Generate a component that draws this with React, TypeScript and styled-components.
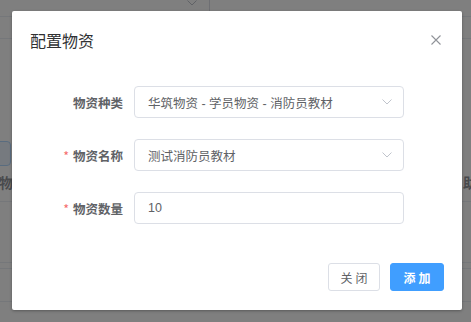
import styled, { createGlobalStyle } from 'styled-components'

const GlobalStyle = createGlobalStyle`
    html, body {
        margin: 0;
        padding: 0;
        background: #fff;
    }
    body {
        font-family: "Liberation Sans", "Noto Sans CJK SC", sans-serif;
    }
`;

const Page = styled.div`
    position: relative;
    width: 471px;
    height: 322px;
    overflow: hidden;
    background: #fff;
`;

const TopBar = styled.div`
    height: 16px;
    border-bottom: 1px solid #ebeef5;
    display: flex;
`;

const TopSelect = styled.div`
    width: 210px;
    height: 11px;
    border-right: 1px solid #dcdfe6;
    display: flex;
    justify-content: flex-end;
    align-items: flex-start;
    padding-right: 12px;
    box-sizing: border-box;
    color: #c0c4cc;
`;

const PageRow = styled.div<{ $h: number }>`
    height: ${p => p.$h}px;
    border-bottom: 1px solid #ebeef5;
    box-sizing: border-box;
`;

const ToolRow = styled.div`
    height: 163px;
    box-sizing: border-box;
    padding-top: 102px;
    display: flex;
    flex-direction: column;
    justify-content: space-between;
    border-bottom: 1px solid #ebeef5;
`;

const GhostButton = styled.div`
    width: 40px;
    height: 23px;
    margin-left: -31px;
    border: 1px solid #b3d8ff;
    border-radius: 4px;
    background: #ecf5ff;
`;

const HeadRow = styled.div`
    display: flex;
    justify-content: space-between;
    align-items: center;
    height: 22px;
    margin-bottom: 8px;
    font-size: 14px;
    font-weight: bold;
    color: #909399;
`;

const HeadCellLeft = styled.span`
    margin-left: -1px;
`;

const HeadCellRight = styled.span`
    margin-right: -6px;
`;

const Overlay = styled.div`
    position: absolute;
    inset: 0;
    background: rgba(0, 0, 0, 0.5);
    padding: 11px 0 0 12px;
    box-sizing: border-box;
`;

const Dialog = styled.div`
    width: 450px;
    height: 299px;
    background: #fff;
    border-radius: 2px;
    box-shadow: 0 1px 3px rgba(0, 0, 0, 0.3);
    display: flex;
    flex-direction: column;
    box-sizing: border-box;
`;

const Header = styled.div`
    display: flex;
    justify-content: space-between;
    align-items: center;
    padding: 18px 21px 0 18px;
    height: 22px;
`;

const Title = styled.span`
    font-size: 16px;
    line-height: 22px;
    color: #303133;
    font-family: "Noto Sans CJK SC", sans-serif;
`;

const CloseIcon = styled.span`
    display: flex;
    color: #909399;
    margin-top: -1px;
`;

const Form = styled.div`
    display: flex;
    flex-direction: column;
    gap: 21px;
    padding-top: 35px;
`;

const Field = styled.div`
    display: flex;
    align-items: center;
    height: 32px;
`;

const Label = styled.label`
    width: 111px;
    padding-right: 11px;
    text-align: right;
    font-size: 12.5px;
    font-weight: bold;
    color: #606266;
    font-family: "Noto Sans CJK SC", sans-serif;
    box-sizing: content-box;
    flex-shrink: 0;
`;

const Star = styled.span`
    color: #f56c6c;
    margin-right: 4px;
    font-weight: normal;
`;

const InputBox = styled.div`
    width: 270px;
    height: 32px;
    border: 1px solid #dcdfe6;
    border-radius: 4px;
    box-sizing: border-box;
    display: flex;
    align-items: center;
    justify-content: space-between;
    padding: 0 11px 0 13px;
    font-size: 12.5px;
    color: #606266;
`;

const Chevron = styled.span`
    display: flex;
    color: #c0c4cc;
`;

const Footer = styled.div`
    margin-top: auto;
    display: flex;
    justify-content: flex-end;
    gap: 10px;
    padding: 0 18px 19px 0;
`;

const Button = styled.button<{ $primary?: boolean }>`
    height: 28px;
    width: ${p => (p.$primary ? 54 : 52)}px;
    border-radius: 3px;
    border: 1px solid ${p => (p.$primary ? '#409eff' : '#dcdfe6')};
    background: ${p => (p.$primary ? '#409eff' : '#fff')};
    color: ${p => (p.$primary ? '#fff' : '#606266')};
    font-size: 12px;
    font-weight: ${p => (p.$primary ? 'bold' : 'normal')};
    letter-spacing: 3px;
    text-indent: 3px;
    font-family: "Noto Sans CJK SC", sans-serif;
    padding: 0;
    cursor: pointer;
`;

function ChevronDown() {
    return (
        <svg width="10" height="6" viewBox="0 0 10 6" fill="none">
            <path d="M0.5 0.5 L5 5 L9.5 0.5" stroke="currentColor" strokeWidth="1" />
        </svg>
    );
}

export default function App() {
    const fields = [
        { label: "物资种类", value: "华筑物资 - 学员物资 - 消防员教材", required: false, select: true },
        { label: "物资名称", value: "测试消防员教材", required: true, select: true },
        { label: "物资数量", value: "10", required: true, select: false },
    ];

    return (
        <Page>
            <GlobalStyle />
            <TopBar>
                <TopSelect><ChevronDown /></TopSelect>
            </TopBar>
            <PageRow $h={22} />
            <ToolRow>
                <GhostButton />
                <HeadRow>
                    <HeadCellLeft>物资名称</HeadCellLeft>
                    <HeadCellRight>助</HeadCellRight>
                </HeadRow>
            </ToolRow>
            <PageRow $h={61} />
            <PageRow $h={6} />
            <PageRow $h={33} />

            <Overlay>
                <Dialog>
                    <Header>
                        <Title>配置物资</Title>
                        <CloseIcon>
                            <svg width="10" height="10" viewBox="0 0 10 10">
                                <path d="M0.5 0.5 L9.5 9.5 M9.5 0.5 L0.5 9.5" stroke="currentColor" strokeWidth="1.1" />
                            </svg>
                        </CloseIcon>
                    </Header>
                    <Form>
                        {fields.map((f, index) => (
                            <Field key={index}>
                                <Label>
                                    {f.required && <Star>*</Star>}
                                    {f.label}
                                </Label>
                                <InputBox>
                                    <span>{f.value}</span>
                                    {f.select && <Chevron><ChevronDown /></Chevron>}
                                </InputBox>
                            </Field>
                        ))}
                    </Form>
                    <Footer>
                        <Button>关闭</Button>
                        <Button $primary>添加</Button>
                    </Footer>
                </Dialog>
            </Overlay>
        </Page>
    );
}
